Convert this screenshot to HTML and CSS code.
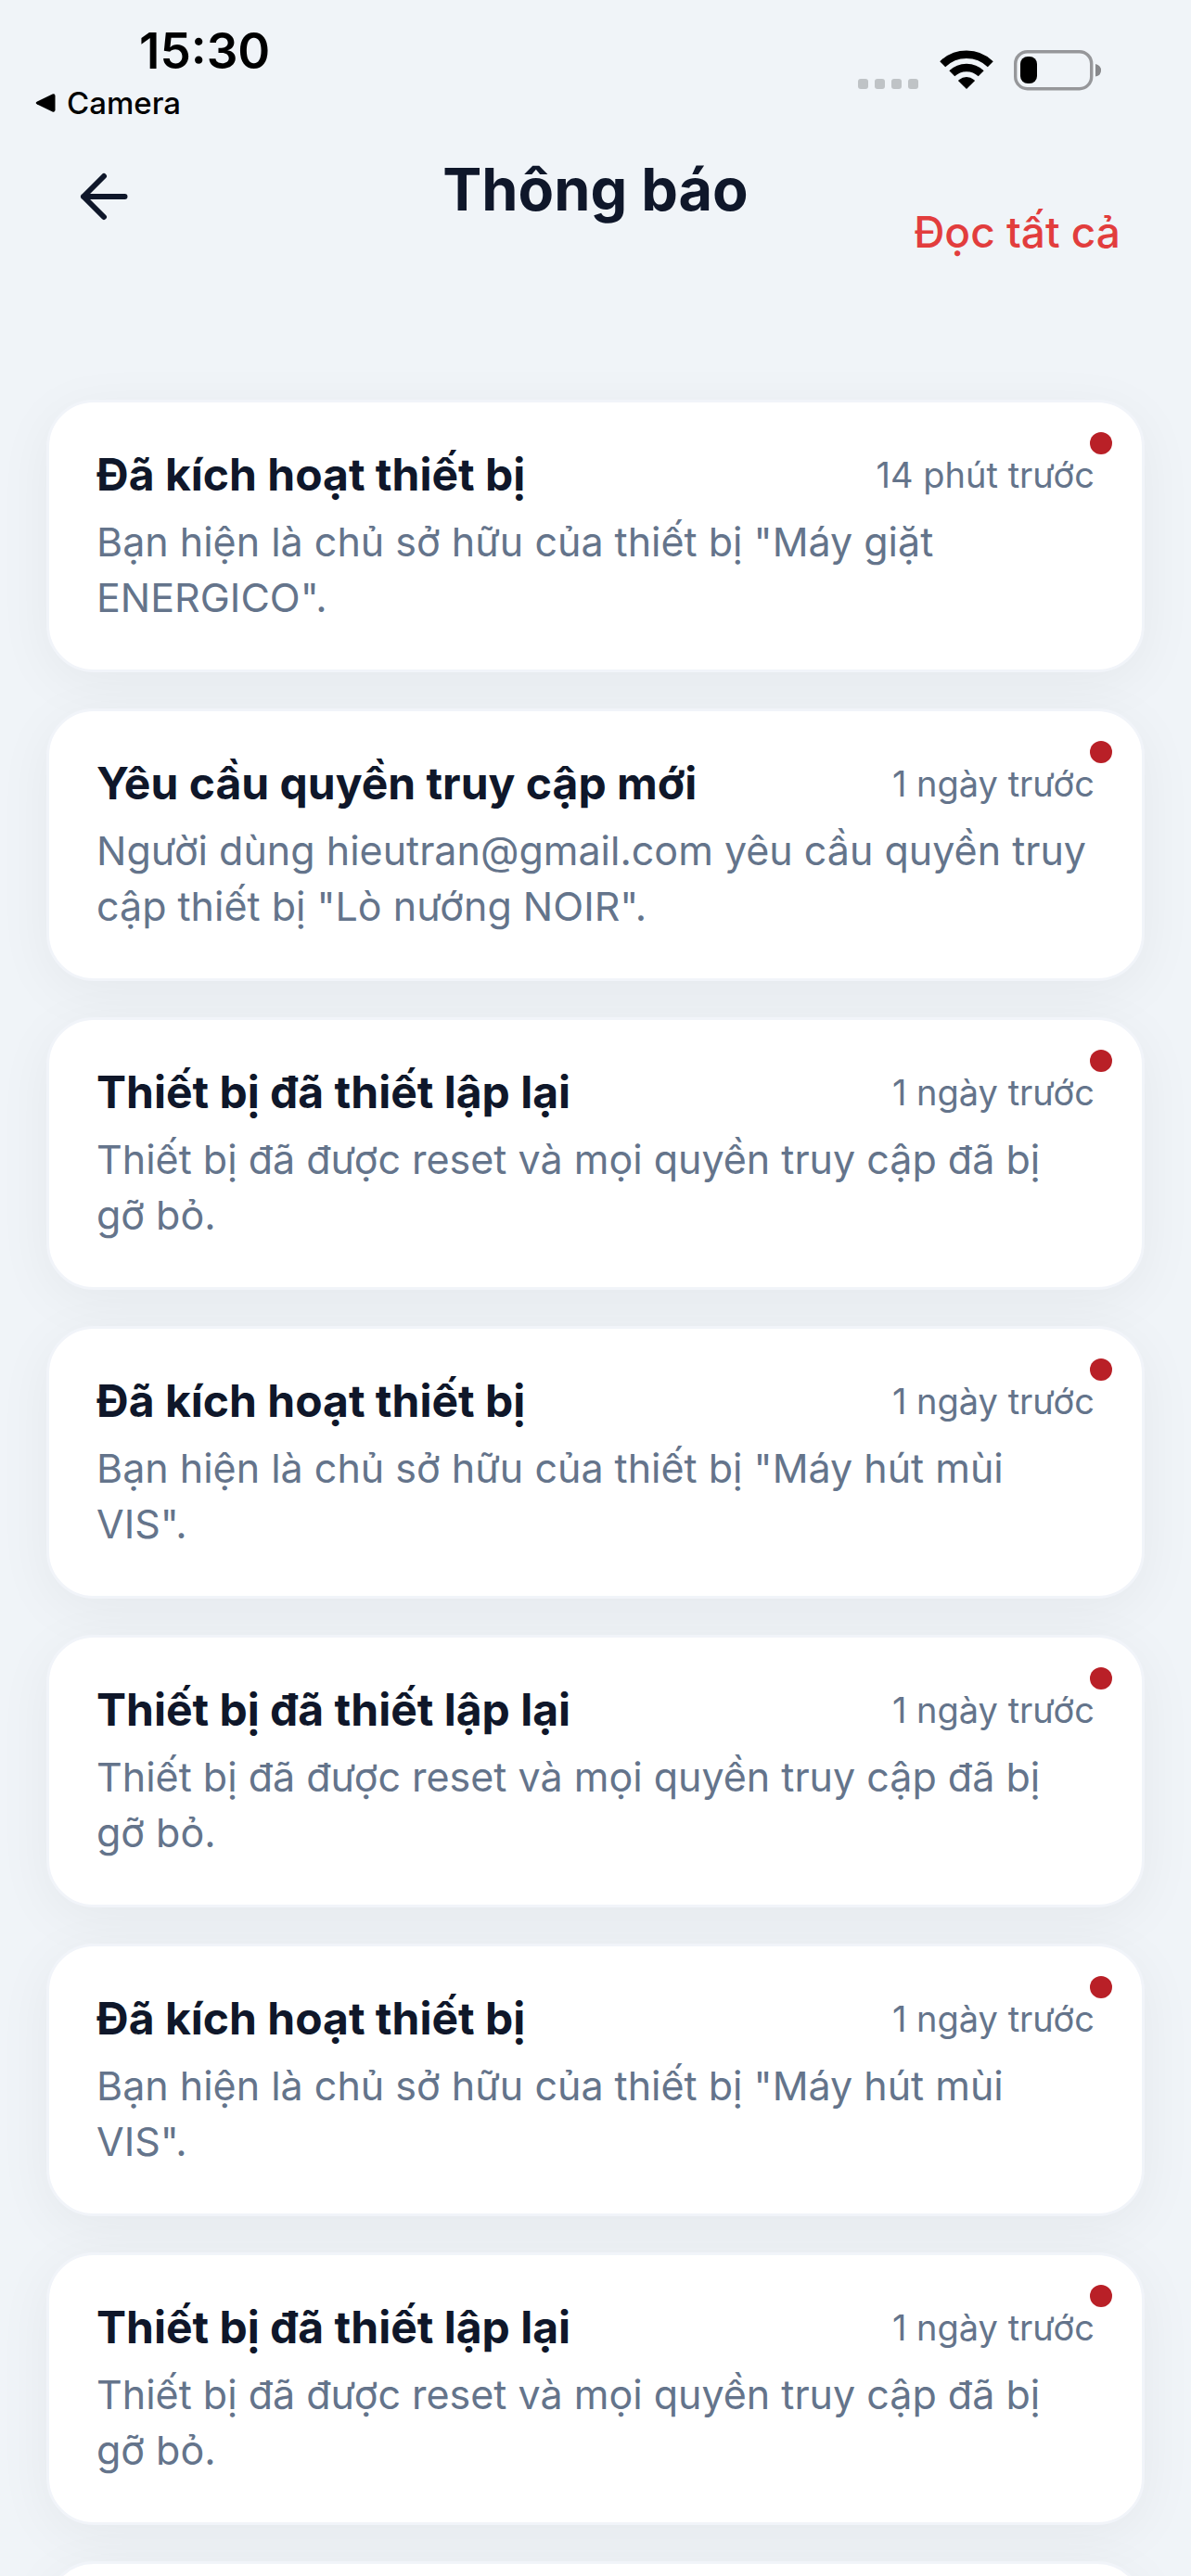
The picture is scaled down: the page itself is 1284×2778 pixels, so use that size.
FILE: index.html
```html
<!DOCTYPE html>
<html lang="vi">
    <head>
        <meta charset="UTF-8" />
        <meta name="viewport" content="width=device-width, initial-scale=1" />
        <title>Thông báo</title>
        <link rel="stylesheet" href="styles.css">
    </head>

    <body>
        <div class="app">
            <div class="status-bar">
                <div class="status-left">
                    <span class="clock">15:30</span>
                    <a class="back-app" href="#">
                        <svg width="22" height="20" viewBox="0 0 22 20"><path d="M2 8.6 18.500 .6Q21.500 -.4 21.500 2.500V17.500Q21.500 20.400 18.500 19.400L2 11.400Q-.6 10 2 8.600Z" /></svg>
                        Camera
                    </a>
                </div>
                <div class="status-right">
                    <svg width="66" height="44" viewBox="0 0 66 44" fill="#bfc3c6">
                        <rect x="0" y="31" width="11" height="11" rx="3" />
                        <rect x="18" y="31" width="11" height="11" rx="3" />
                        <rect x="36" y="31" width="11" height="11" rx="3" />
                        <rect x="54" y="31" width="11" height="11" rx="3" />
                    </svg>
                    <svg width="58" height="44" viewBox="0 0 58 44">
                        <g fill="none" stroke="#000" stroke-width="8.500">
                            <path d="M3.200 15.200A37 37 0 0 1 54.800 15.200" />
                            <path d="M13.300 25.300A22.500 22.500 0 0 1 44.700 25.300" />
                        </g>
                        <path d="M29 42 20.400 33.400Q20 32.800 20.600 32.300Q29 25.700 37.400 32.300Q38 32.800 37.600 33.400Z" />
                    </svg>
                    <svg width="95" height="44" viewBox="0 0 95 44">
                        <rect x="1.700" y="1.700" width="82" height="40" rx="13" fill="none" stroke="#96979a" stroke-width="3.400" />
                        <rect x="7" y="7" width="18" height="29" rx="8" />
                        <path d="M88 15Q94 16.500 94 22T88 28.500Z" fill="#87888b" />
                    </svg>
                </div>
            </div>

            <header class="header">
                <button class="back" type="button" aria-label="Quay lại">
                    <svg width="52" height="52" viewBox="0 0 52 52" fill="none" stroke="#0f172a" stroke-width="6" stroke-linecap="round" stroke-linejoin="round">
                        <path d="M48.500 26H4M26 4 4 26 26 48" />
                    </svg>
                </button>
                <h1 class="title">Thông báo</h1>
                <button class="read-all" type="button">Đọc tất cả</button>
            </header>

            <ul class="list">
                <li class="card unread">
                    <div class="card-head">
                        <h2>Đã kích hoạt thiết bị</h2>
                        <time>14 phút trước</time>
                    </div>
                    <p>Bạn hiện là chủ sở hữu của thiết bị "Máy giặt ENERGICO".</p>
                </li>
                <li class="card unread">
                    <div class="card-head">
                        <h2>Yêu cầu quyền truy cập mới</h2>
                        <time>1 ngày trước</time>
                    </div>
                    <p>Người dùng hieutran@gmail.com yêu cầu quyền truy cập thiết bị "Lò nướng NOIR".</p>
                </li>
                <li class="card unread">
                    <div class="card-head">
                        <h2>Thiết bị đã thiết lập lại</h2>
                        <time>1 ngày trước</time>
                    </div>
                    <p>Thiết bị đã được reset và mọi quyền truy cập đã bị gỡ bỏ.</p>
                </li>
                <li class="card unread">
                    <div class="card-head">
                        <h2>Đã kích hoạt thiết bị</h2>
                        <time>1 ngày trước</time>
                    </div>
                    <p>Bạn hiện là chủ sở hữu của thiết bị "Máy hút mùi VIS".</p>
                </li>
                <li class="card unread">
                    <div class="card-head">
                        <h2>Thiết bị đã thiết lập lại</h2>
                        <time>1 ngày trước</time>
                    </div>
                    <p>Thiết bị đã được reset và mọi quyền truy cập đã bị gỡ bỏ.</p>
                </li>
                <li class="card unread">
                    <div class="card-head">
                        <h2>Đã kích hoạt thiết bị</h2>
                        <time>1 ngày trước</time>
                    </div>
                    <p>Bạn hiện là chủ sở hữu của thiết bị "Máy hút mùi VIS".</p>
                </li>
                <li class="card unread">
                    <div class="card-head">
                        <h2>Thiết bị đã thiết lập lại</h2>
                        <time>1 ngày trước</time>
                    </div>
                    <p>Thiết bị đã được reset và mọi quyền truy cập đã bị gỡ bỏ.</p>
                </li>
                <li class="card placeholder"></li>
            </ul>
        </div>
    </body>
</html>
```
FILE: styles.css
```css
* {
    margin: 0;
    padding: 0;
    box-sizing: border-box;
}

body {
    background: #f0f4f8;
    color: #0f172a;
    font-family: Inter, "Noto Sans", sans-serif;
}

button {
    border: 0;
    background: none;
    font: inherit;
    cursor: pointer;
}

svg {
    display: block;
}

.app {
    display: flex;
    flex-direction: column;
    height: 100vh;
    overflow: hidden;
}

/* status bar */
.status-bar {
    display: flex;
    justify-content: space-between;
    align-items: flex-start;
    flex-shrink: 0;
    padding: 24px 96px 0 38px;
    color: #000;
}

.status-left {
    display: flex;
    flex-direction: column;
}

.clock {
    padding-left: 112px;
    font-size: 53px;
    line-height: 62px;
    font-weight: 600;
}

.back-app {
    display: flex;
    align-items: center;
    gap: 12px;
    color: #000;
    font-size: 33px;
    line-height: 50px;
    font-weight: 500;
    text-decoration: none;
}

.status-right {
    display: flex;
    gap: 22px;
    padding-top: 30px;
}

/* header */
.header {
    display: grid;
    grid-template-columns: 1fr auto 1fr;
    align-items: start;
    flex-shrink: 0;
    padding: 32px 76px 0;
}

.back {
    justify-self: start;
    padding: 18px 10px;
}

.title {
    font-size: 63px;
    line-height: 72px;
    font-weight: 700;
}

.read-all {
    justify-self: end;
    padding-top: 52px;
    color: #e23d3d;
    font-size: 46px;
    line-height: 60px;
    font-weight: 500;
}

/* notifications */
.list {
    display: flex;
    flex-direction: column;
    gap: 39px;
    padding: 151px 50px 0;
    list-style: none;
}

.card {
    position: relative;
    flex-shrink: 0;
    padding: 48px 51px;
    border: 3px solid #f1f4f9;
    border-radius: 51px;
    background: #fff;
    box-shadow: 0 12px 60px rgba(0, 0, 0, 0.05);
}

.unread::after {
    content: "";
    position: absolute;
    top: 32px;
    right: 32px;
    width: 24px;
    height: 24px;
    border-radius: 50%;
    background: #b92027;
}

.placeholder {
    min-height: 294px;
}

.card-head {
    display: flex;
    justify-content: space-between;
    align-items: center;
    margin-bottom: 12px;
}

.card h2 {
    font-size: 48px;
    line-height: 60px;
    font-weight: 700;
}

.card time {
    color: #64748b;
    font-size: 38px;
    line-height: 60px;
}

.card p {
    color: #64748b;
    font-size: 43px;
    line-height: 60px;
}
```
